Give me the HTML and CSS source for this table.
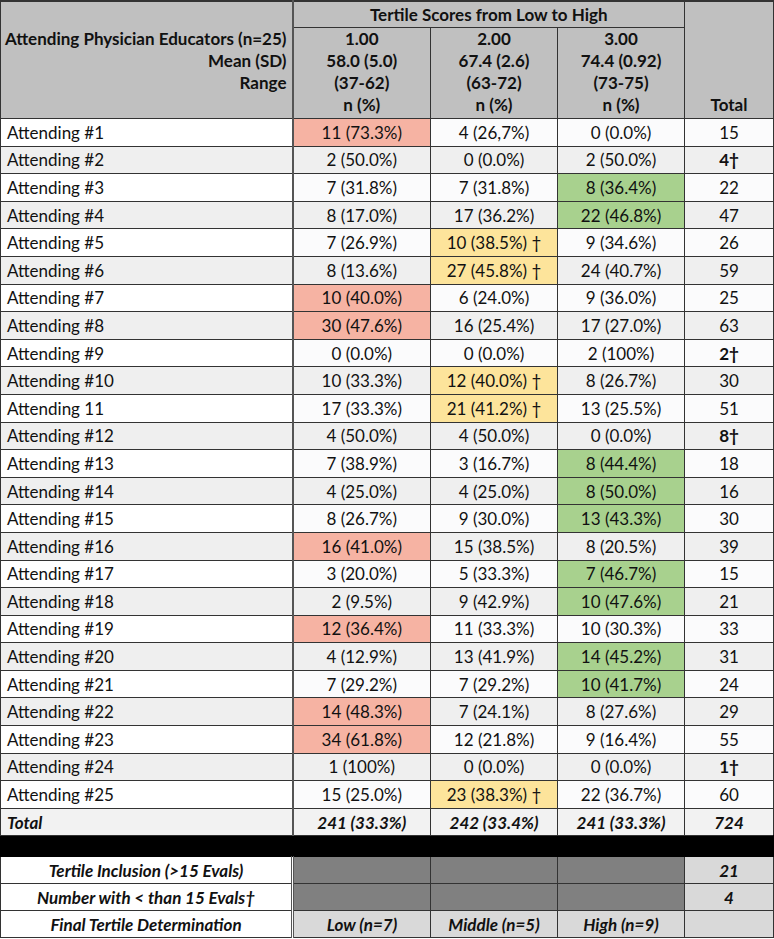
FILE: index.html
```html
<!DOCTYPE html>
<html>
<head>
<meta charset="utf-8">
<link rel="stylesheet" href="styles.css">
</head>
<body>
<table class="tbl">
  <colgroup>
    <col class="c1"><col class="c2"><col class="c3"><col class="c4"><col class="c5">
  </colgroup>
  <thead>
    <tr class="h1">
      <th rowspan="2" class="hname">Attending Physician Educators (n=25)<br>Mean (SD)<br>Range<br>&nbsp;</th>
      <th colspan="3" class="htitle">Tertile Scores from Low to High</th>
      <th rowspan="2" class="htotal">Total</th>
    </tr>
    <tr class="h2">
      <th>1.00<br>58.0 (5.0)<br>(37-62)<br>n (%)</th>
      <th>2.00<br>67.4 (2.6)<br>(63-72)<br>n (%)</th>
      <th>3.00<br>74.4 (0.92)<br>(73-75)<br>n (%)</th>
    </tr>
  </thead>
  <tbody>
    <tr><td>Attending #1</td><td class="red">11 (73.3%)</td><td>4 (26,7%)</td><td>0 (0.0%)</td><td>15</td></tr>
    <tr class="alt"><td>Attending #2</td><td>2 (50.0%)</td><td>0 (0.0%)</td><td>2 (50.0%)</td><td class="b">4†</td></tr>
    <tr><td>Attending #3</td><td>7 (31.8%)</td><td>7 (31.8%)</td><td class="green">8 (36.4%)</td><td>22</td></tr>
    <tr class="alt"><td>Attending #4</td><td>8 (17.0%)</td><td>17 (36.2%)</td><td class="green">22 (46.8%)</td><td>47</td></tr>
    <tr><td>Attending #5</td><td>7 (26.9%)</td><td class="yel">10 (38.5%) †</td><td>9 (34.6%)</td><td>26</td></tr>
    <tr class="alt"><td>Attending #6</td><td>8 (13.6%)</td><td class="yel">27 (45.8%) †</td><td>24 (40.7%)</td><td>59</td></tr>
    <tr><td>Attending #7</td><td class="red">10 (40.0%)</td><td>6 (24.0%)</td><td>9 (36.0%)</td><td>25</td></tr>
    <tr class="alt"><td>Attending #8</td><td class="red">30 (47.6%)</td><td>16 (25.4%)</td><td>17 (27.0%)</td><td>63</td></tr>
    <tr><td>Attending #9</td><td>0 (0.0%)</td><td>0 (0.0%)</td><td>2 (100%)</td><td class="b">2†</td></tr>
    <tr class="alt"><td>Attending #10</td><td>10 (33.3%)</td><td class="yel">12 (40.0%) †</td><td>8 (26.7%)</td><td>30</td></tr>
    <tr><td>Attending 11</td><td>17 (33.3%)</td><td class="yel">21 (41.2%) †</td><td>13 (25.5%)</td><td>51</td></tr>
    <tr class="alt"><td>Attending #12</td><td>4 (50.0%)</td><td>4 (50.0%)</td><td>0 (0.0%)</td><td class="b">8†</td></tr>
    <tr><td>Attending #13</td><td>7 (38.9%)</td><td>3 (16.7%)</td><td class="green">8 (44.4%)</td><td>18</td></tr>
    <tr class="alt"><td>Attending #14</td><td>4 (25.0%)</td><td>4 (25.0%)</td><td class="green">8 (50.0%)</td><td>16</td></tr>
    <tr><td>Attending #15</td><td>8 (26.7%)</td><td>9 (30.0%)</td><td class="green">13 (43.3%)</td><td>30</td></tr>
    <tr class="alt"><td>Attending #16</td><td class="red">16 (41.0%)</td><td>15 (38.5%)</td><td>8 (20.5%)</td><td>39</td></tr>
    <tr><td>Attending #17</td><td>3 (20.0%)</td><td>5 (33.3%)</td><td class="green">7 (46.7%)</td><td>15</td></tr>
    <tr class="alt"><td>Attending #18</td><td>2 (9.5%)</td><td>9 (42.9%)</td><td class="green">10 (47.6%)</td><td>21</td></tr>
    <tr><td>Attending #19</td><td class="red">12 (36.4%)</td><td>11 (33.3%)</td><td>10 (30.3%)</td><td>33</td></tr>
    <tr class="alt"><td>Attending #20</td><td>4 (12.9%)</td><td>13 (41.9%)</td><td class="green">14 (45.2%)</td><td>31</td></tr>
    <tr><td>Attending #21</td><td>7 (29.2%)</td><td>7 (29.2%)</td><td class="green">10 (41.7%)</td><td>24</td></tr>
    <tr class="alt"><td>Attending #22</td><td class="red">14 (48.3%)</td><td>7 (24.1%)</td><td>8 (27.6%)</td><td>29</td></tr>
    <tr><td>Attending #23</td><td class="red">34 (61.8%)</td><td>12 (21.8%)</td><td>9 (16.4%)</td><td>55</td></tr>
    <tr class="alt"><td>Attending #24</td><td>1 (100%)</td><td>0 (0.0%)</td><td>0 (0.0%)</td><td class="b">1†</td></tr>
    <tr><td>Attending #25</td><td>15 (25.0%)</td><td class="yel">23 (38.3%) †</td><td>22 (36.7%)</td><td>60</td></tr>
    <tr class="alt total"><td>Total</td><td>241 (33.3%)</td><td>242 (33.4%)</td><td>241 (33.3%)</td><td>724</td></tr>
    <tr class="black"><td colspan="5"></td></tr>
    <tr class="foot"><td>Tertile Inclusion (&gt;15 Evals)</td><td class="dk"></td><td class="dk"></td><td class="dk"></td><td class="lt">21</td></tr>
    <tr class="foot"><td>Number with &lt; than 15 Evals†</td><td class="dk"></td><td class="dk"></td><td class="dk"></td><td class="lt">4</td></tr>
    <tr class="foot"><td>Final Tertile Determination</td><td class="lt">Low (n=7)</td><td class="lt">Middle (n=5)</td><td class="lt">High (n=9)</td><td class="lt"></td></tr>
  </tbody>
</table>
</body>
</html>
```
FILE: styles.css
```css
html, body {
  margin: 0;
  padding: 0;
  background: #ffffff;
}
body {
  font-family: Lato, "Open Sans", sans-serif;
  font-size: 17px;
  color: #111;
}
.tbl {
  border-collapse: collapse;
  width: 773px;
  table-layout: fixed;
}
.c1 { width: 292px; }
.c2 { width: 138px; }
.c3 { width: 127px; }
.c4 { width: 127px; }
.c5 { width: 89px; }

.tbl th, .tbl td {
  border: 1px solid #333;
  padding: 0;
  white-space: nowrap;
}
.tbl thead th {
  background: #c0c0c0;
  font-weight: bold;
  line-height: 22px;
  text-align: center;
}
.h1 th { border-top: 2px solid #333; }
.htitle { height: 25px; }
.tbl thead th.hname {
  text-align: right;
  padding-right: 5px;
  vertical-align: bottom;
  padding-bottom: 2px;
  border-right: 2px solid #555;
}
.tbl thead th.htotal {
  vertical-align: bottom;
  padding-bottom: 2px;
}
.tbl thead .h2 th {
  height: 86px;
  vertical-align: bottom;
  padding-bottom: 2px;
}
.tbl tbody td {
  height: 26.6px;
  text-align: center;
  background: #fbfbfc;
}
.tbl tbody td:first-child {
  text-align: left;
  padding-left: 6px;
  background: #ffffff;
  border-right: 2px solid #555;
}
.tbl tbody tr.alt td {
  background: #efefef;
}
.tbl tbody tr td.red { background: #f6b3a3; }
.tbl tbody tr td.yel { background: #fde49b; }
.tbl tbody tr td.green { background: #a8d18e; }
.b { font-weight: bold; }
.total td {
  font-weight: bold;
  font-style: italic;
}
.tbl tbody tr.total td { background: #f2f2f2; }
.tbl tbody tr.black td {
  background: #000;
  height: 20px;
  border-color: #000;
}
.tbl tbody tr.foot td {
  height: 26px;
  font-weight: bold;
  font-style: italic;
}
.tbl tbody tr.foot td:first-child {
  text-align: center;
  padding-left: 0;
  background: #fff;
  border-right: 3px double #555;
}
.tbl tbody tr.foot td.dk { background: #808080; }
.tbl tbody tr.foot td.lt { background: #d9d9d9; }
```
